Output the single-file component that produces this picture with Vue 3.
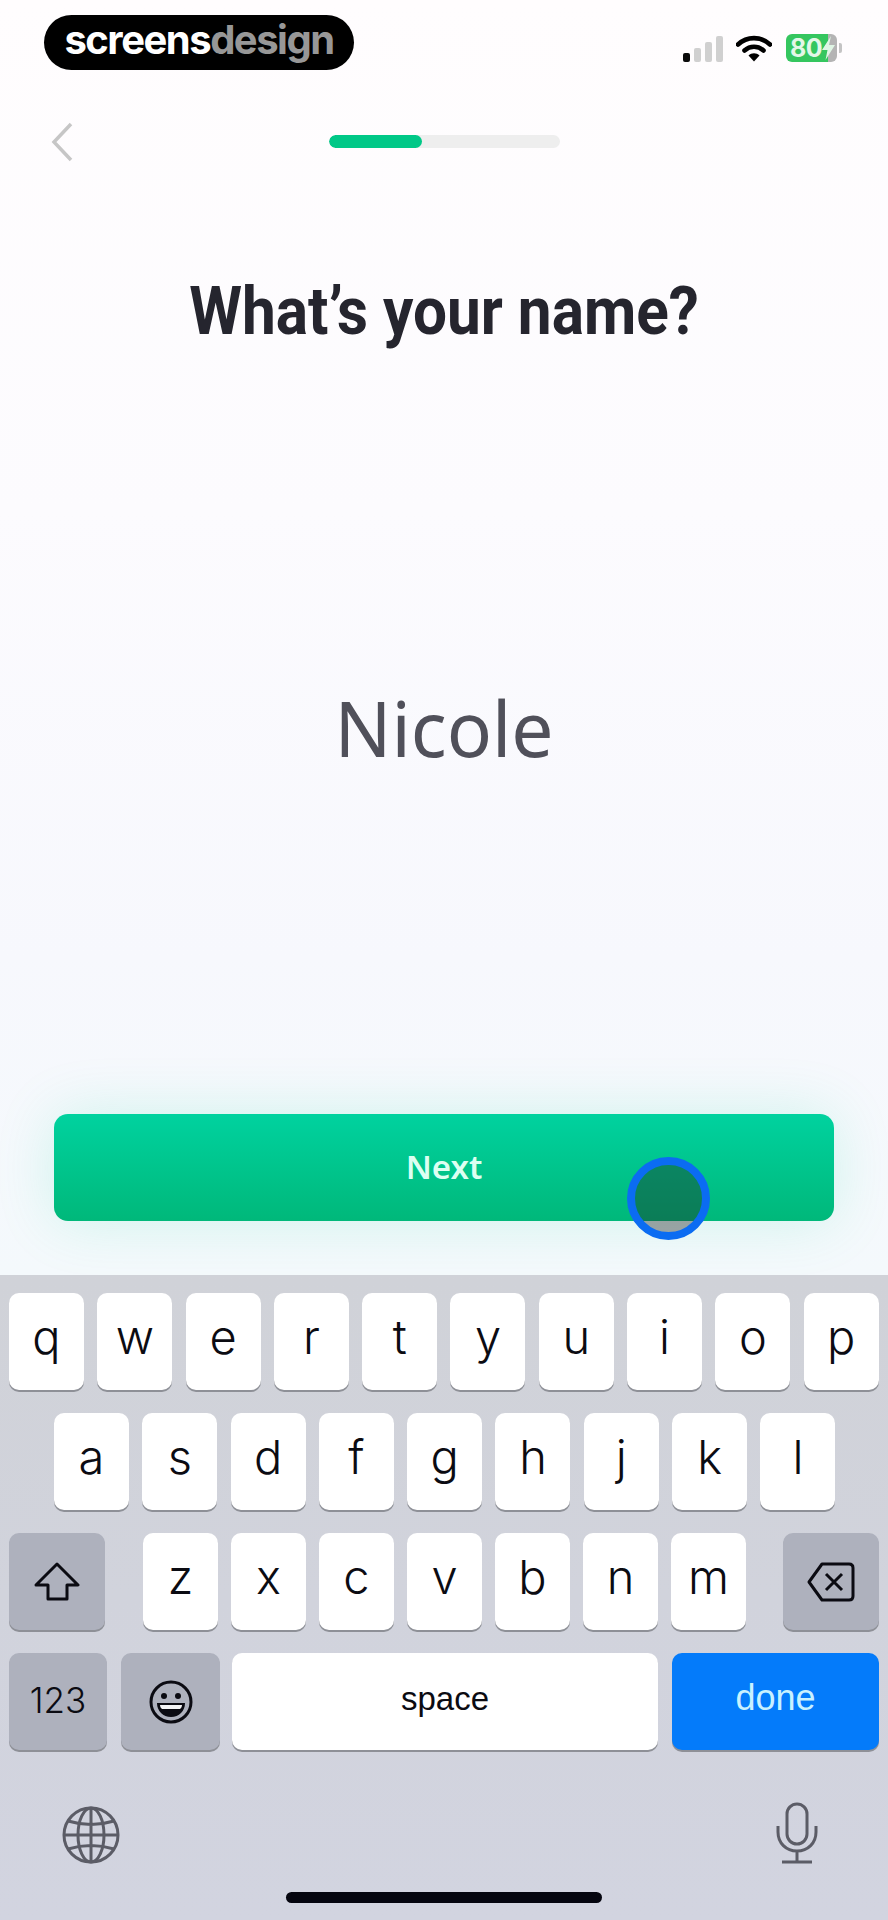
<script setup>
const rowOne = ["q", "w", "e", "r", "t", "y", "u", "i", "o", "p"];
const rowTwo = ["a", "s", "d", "f", "g", "h", "j", "k", "l"];
const rowThree = ["z", "x", "c", "v", "b", "n", "m"];
</script>

<template>
  <div class="screen">
    <div class="upper">
      <header class="status">
        <div class="logo"><span>screens</span><span class="logo-dim">design</span></div>
        <div class="status-icons">
          <svg class="signal" width="42" height="26" viewBox="0 0 42 26">
            <rect x="1" y="17" width="7" height="9" rx="2" fill="#0a0a0a" />
            <rect x="12" y="12" width="7" height="14" rx="2" fill="#d0d0d0" />
            <rect x="23" y="6" width="7" height="20" rx="2" fill="#d0d0d0" />
            <rect x="34" y="0" width="7" height="26" rx="2" fill="#d0d0d0" />
          </svg>
          <svg class="wifi" width="36" height="27" viewBox="0 0 36 27">
            <path d="M2 9.5C11 1 25 1 34 9.5" fill="none" stroke="#000" stroke-width="4.6" stroke-linecap="round" />
            <path d="M8.5 15.5C14 10.5 22 10.5 27.5 15.5" fill="none" stroke="#000" stroke-width="4.6" stroke-linecap="round" />
            <path d="M12.5 20.5C15.5 17.5 20.5 17.5 23.5 20.5L18 26.5Z" fill="#000" />
          </svg>
          <div class="battery">
            <div class="battery-body">
              <span class="battery-text">80</span>
              <svg class="bolt" width="13" height="24" viewBox="0 0 13 24">
                <path d="M9 0L0 14H5.5L3.5 24L13 9H7Z" fill="#dff5e4" />
              </svg>
            </div>
            <div class="battery-nub"></div>
          </div>
        </div>
      </header>

      <nav class="nav">
        <svg class="back" width="22" height="40" viewBox="0 0 22 40">
          <path d="M20 2L3 20L20 38" fill="none" stroke="#c6c6c6" stroke-width="3.5" />
        </svg>
        <div class="progress"><div class="progress-fill"></div></div>
      </nav>

      <h1 class="title">What’s your name?</h1>
      <div class="name">Nicole</div>

      <div class="next-wrap">
        <button class="next">Next</button>
        <div class="touch"></div>
      </div>
    </div>

    <section class="keyboard">
      <div class="row row-one">
        <div v-for="k in rowOne" :key="k" class="key">{{ k }}</div>
      </div>
      <div class="row row-two">
        <div v-for="k in rowTwo" :key="k" class="key">{{ k }}</div>
      </div>
      <div class="row row-three">
        <div class="key key-dark key-side">
          <svg width="46" height="40" viewBox="0 0 46 40">
            <path d="M23 2L44 23H33V37H14V23H2Z" fill="none" stroke="#0b0b12" stroke-width="3" stroke-linejoin="round" />
          </svg>
        </div>
        <div class="letters">
          <div v-for="k in rowThree" :key="k" class="key">{{ k }}</div>
        </div>
        <div class="key key-dark key-side key-delete">
          <svg width="48" height="40" viewBox="0 0 48 40">
            <path d="M15 2H42Q46 2 46 6V34Q46 38 42 38H15L2 20Z" fill="none" stroke="#0b0b12" stroke-width="3" stroke-linejoin="round" />
            <path d="M19 12L35 28M35 12L19 28" fill="none" stroke="#0b0b12" stroke-width="3" />
          </svg>
        </div>
      </div>
      <div class="row row-four">
        <div class="key key-dark key-num">123</div>
        <div class="key key-dark key-emoji">
          <svg width="44" height="44" viewBox="0 0 44 44">
            <circle cx="22" cy="22" r="20" fill="none" stroke="#0b0b12" stroke-width="3" />
            <circle cx="15" cy="16" r="3" fill="#0b0b12" />
            <circle cx="29" cy="16" r="3" fill="#0b0b12" />
            <path d="M8 23H36C36 31 30 37 22 37C14 37 8 31 8 23Z" fill="#0b0b12" />
            <path d="M11 25H33C33 27 32 28 31 29H13C12 28 11 27 11 25Z" fill="#f4f4f6" />
          </svg>
        </div>
        <div class="key key-space">space</div>
        <div class="key key-done">done</div>
      </div>
      <div class="bottom-icons">
        <svg width="58" height="58" viewBox="0 0 58 58">
          <g fill="none" stroke="#5b5c66" stroke-width="3">
            <circle cx="29" cy="29" r="27" />
            <ellipse cx="29" cy="29" rx="13" ry="27" />
            <path d="M29 2V56M2 29H56M6 15Q29 22 52 15M6 43Q29 36 52 43" />
          </g>
        </svg>
        <svg class="mic" width="42" height="62" viewBox="0 0 42 62">
          <g fill="none" stroke="#5b5c66" stroke-width="3">
            <rect x="11" y="2" width="20" height="40" rx="10" />
            <path d="M2 24V30C2 41 10 49 21 49C32 49 40 41 40 30V24M21 49V60M6 60H36" />
          </g>
        </svg>
      </div>
      <div class="home-bar"></div>
    </section>
  </div>
</template>

<style scoped>
.screen {
  width: 888px;
  height: 1920px;
  display: flex;
  flex-direction: column;
  overflow: hidden;
  font-family: "Liberation Sans", Arial, sans-serif;
}

.upper {
  height: 1275px;
  background: linear-gradient(180deg, #fffdfe 0%, #fcfbfe 40%, #f7f8fd 75%, #f4f9fc 100%);
  display: flex;
  flex-direction: column;
  overflow: hidden;
}

.status {
  display: flex;
  justify-content: space-between;
  align-items: flex-start;
  padding: 15px 46px 0 44px;
}

.logo {
  width: 310px;
  height: 55px;
  background: #000;
  border-radius: 28px;
  color: #fff;
  font-family: Inter, sans-serif;
  font-weight: 700;
  font-size: 40px;
  letter-spacing: -1.5px;
  line-height: 50px;
  text-align: center;
}

.logo-dim {
  color: #979797;
}

.status-icons {
  display: flex;
  align-items: flex-start;
  margin-top: 19px;
}

.signal {
  margin-top: 2px;
}

.wifi {
  margin: 1px 14px 0 12px;
}

.battery {
  display: flex;
  align-items: center;
}

.battery-body {
  position: relative;
  width: 51px;
  height: 28px;
  border-radius: 6px;
  background: linear-gradient(90deg, #35c65f 0 42px, #b4b4b4 42px);
  overflow: hidden;
  color: #e4f7e8;
  font-family: Inter, sans-serif;
  font-weight: 700;
  font-size: 25px;
  letter-spacing: -0.5px;
  line-height: 28px;
}

.battery-text {
  margin-left: 4px;
}

.bolt {
  position: absolute;
  left: 36px;
  top: 2px;
}

.battery-nub {
  width: 3px;
  height: 10px;
  margin-left: 2px;
  border-radius: 0 2px 2px 0;
  background: #c4c4c4;
}

.nav {
  position: relative;
  height: 40px;
  margin-top: 52px;
  padding-left: 51px;
}

.back {
  display: block;
}

.progress {
  position: absolute;
  left: 329px;
  top: 13px;
  width: 231px;
  height: 13px;
  border-radius: 7px;
  background: #eeeeee;
  overflow: hidden;
}

.progress-fill {
  width: 93px;
  height: 100%;
  border-radius: 7px;
  background: #00c887;
}

.title {
  margin: 111px 0 0;
  text-align: center;
  font-family: Roboto, sans-serif;
  font-weight: 700;
  font-size: 67px;
  line-height: 76px;
  color: #25252e;
  transform: scaleX(0.9);
}

.name {
  margin-top: 334px;
  text-align: center;
  font-family: "Noto Sans", sans-serif;
  font-size: 76px;
  line-height: 90px;
  color: #50505a;
  transform: scaleX(0.985);
}

.next-wrap {
  position: relative;
  margin: auto 54px 54px;
}

.next {
  display: block;
  width: 100%;
  height: 107px;
  border: none;
  border-radius: 14px;
  background: linear-gradient(180deg, #00d29f 0%, #00b87a 100%);
  box-shadow: 0 0 60px rgba(0, 215, 150, 0.16);
  color: #dcfff2;
  font-family: "Noto Sans", sans-serif;
  font-weight: 600;
  font-size: 33px;
  padding: 0 0 2px;
}

.touch {
  position: absolute;
  left: 573px;
  top: 43px;
  width: 83px;
  height: 83px;
  box-sizing: border-box;
  border: 8px solid #0b6cf2;
  border-radius: 50%;
  background: rgba(30, 30, 30, 0.38);
}

.keyboard {
  position: relative;
  flex: 1;
  background: linear-gradient(180deg, #d0d2d8 0%, #d2d4e0 100%);
  padding-top: 18px;
}

.row {
  display: flex;
  height: 97px;
  margin-bottom: 23px;
}

.row-one {
  gap: 13.3px;
  padding-left: 9px;
}

.row-two {
  gap: 13.3px;
  padding-left: 54px;
}

.row-three {
  padding: 0 9px;
}

.row-four {
  gap: 12px;
  padding: 0 9px;
}

.letters {
  display: flex;
  gap: 13px;
  margin-left: 38px;
}

.key {
  flex: none;
  width: 75px;
  display: flex;
  align-items: center;
  justify-content: center;
  border-radius: 10px;
  background: #fff;
  box-shadow: 0 2px 0 #8e9097;
  font-family: Inter, sans-serif;
  font-weight: 300;
  font-size: 47px;
  line-height: 1;
  color: #0b0b12;
  padding-bottom: 11px;
  box-sizing: border-box;
}

.key-dark {
  background: #aeb1bd;
  padding-bottom: 0;
}

.key-side {
  width: 96px;
}

.key-delete {
  margin-left: auto;
}

.key-num {
  width: 98px;
  font-size: 35px;
  padding-bottom: 2px;
}

.key-emoji {
  width: 99px;
  margin-left: 2px;
}

.key-space {
  width: 426px;
  font-family: "Liberation Sans", sans-serif;
  font-weight: 400;
  font-size: 33px;
  padding-bottom: 6px;
}

.key-done {
  width: 207px;
  margin-left: 2px;
  background: #047bfa;
  color: #c9f1ff;
  font-family: "Liberation Sans", sans-serif;
  font-weight: 400;
  font-size: 36px;
  padding-bottom: 8px;
}

.bottom-icons {
  display: flex;
  justify-content: space-between;
  align-items: flex-start;
  padding: 33px 70px 0 62px;
}

.mic {
  margin-top: -4px;
}

.home-bar {
  width: 316px;
  height: 11px;
  border-radius: 6px;
  background: #05050f;
  margin: 28px auto 0;
}
</style>

<style>
body {
  margin: 0;
  background: #fff;
}
</style>
